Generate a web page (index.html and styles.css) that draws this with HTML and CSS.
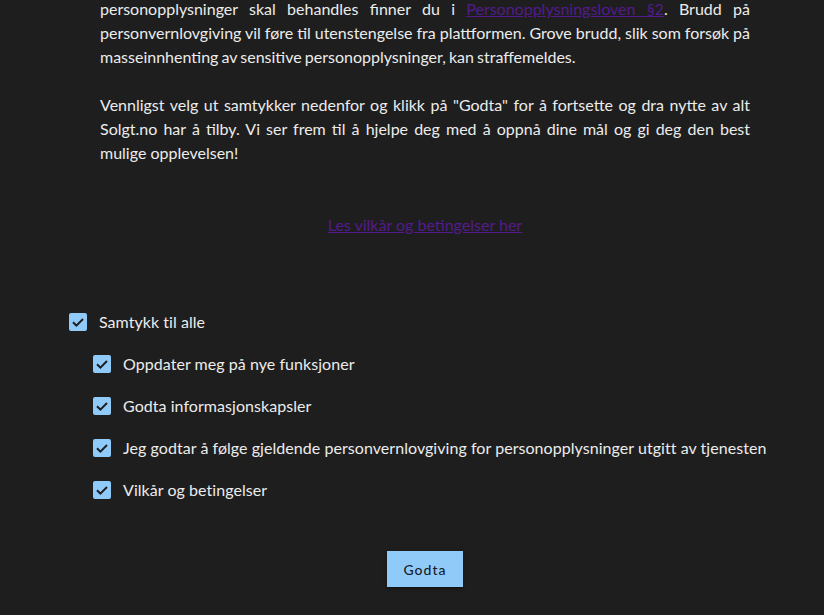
FILE: index.html
```
<!DOCTYPE html>
<html lang="no">
<head>
<meta charset="utf-8">
<title>Samtykke</title>
<link rel="stylesheet" href="styles.css">
</head>
<body>
<main class="page">
  <section class="terms">
    <p class="para para-tight">personopplysninger skal behandles finner du i <a class="link" href="#">Personopplysningsloven §2</a>. Brudd på personvernlovgiving vil føre til utenstengelse fra plattformen. Grove brudd, slik som forsøk på masseinnhenting av sensitive personopplysninger, kan straffemeldes.</p>
    <p class="para">Vennligst velg ut samtykker nedenfor og klikk på "Godta" for å fortsette og dra nytte av alt Solgt.no har å tilby. Vi ser frem til å hjelpe deg med å oppnå dine mål og gi deg den best mulige opplevelsen!</p>
    <div class="linkrow"><a class="link" href="#">Les vilkår og betingelser her</a></div>
  </section>
  <form class="consents">
    <label class="row">
      <span class="box"><svg viewBox="0 0 18 18" width="18" height="18"><polyline points="4,9.3 7.4,12.7 14,6" fill="none" stroke="#1e1e1e" stroke-width="2"/></svg></span>
      <span>Samtykk til alle</span>
    </label>
    <div class="sub">
      <label class="row">
        <span class="box"><svg viewBox="0 0 18 18" width="18" height="18"><polyline points="4,9.3 7.4,12.7 14,6" fill="none" stroke="#1e1e1e" stroke-width="2"/></svg></span>
        <span>Oppdater meg på nye funksjoner</span>
      </label>
      <label class="row">
        <span class="box"><svg viewBox="0 0 18 18" width="18" height="18"><polyline points="4,9.3 7.4,12.7 14,6" fill="none" stroke="#1e1e1e" stroke-width="2"/></svg></span>
        <span>Godta informasjonskapsler</span>
      </label>
      <label class="row">
        <span class="box"><svg viewBox="0 0 18 18" width="18" height="18"><polyline points="4,9.3 7.4,12.7 14,6" fill="none" stroke="#1e1e1e" stroke-width="2"/></svg></span>
        <span>Jeg godtar å følge gjeldende personvernlovgiving for personopplysninger utgitt av tjenesten</span>
      </label>
      <label class="row">
        <span class="box"><svg viewBox="0 0 18 18" width="18" height="18"><polyline points="4,9.3 7.4,12.7 14,6" fill="none" stroke="#1e1e1e" stroke-width="2"/></svg></span>
        <span>Vilkår og betingelser</span>
      </label>
    </div>
    <div class="actions"><button type="button" class="btn">Godta</button></div>
  </form>
</main>
</body>
</html>
```
FILE: styles.css
```
html, body {
  margin: 0;
  padding: 0;
  background: #1e1e1e;
  height: 100%;
  overflow: hidden;
}
.page {
  font-family: Lato, "Liberation Sans", sans-serif;
  font-size: 16px;
  line-height: 24px;
  color: #ececec;
  margin-top: -3px;
}
.terms {
  margin-left: 100px;
  width: 650px;
}
.para {
  margin: 0 0 24px 0;
  text-align: justify;
}
.para-tight {
  word-spacing: -1px;
}
.link {
  color: #551a8b;
  text-decoration: underline;
}
.linkrow {
  text-align: center;
  margin-top: 48px;
}
.consents {
  margin: 64px 0 0 69px;
}
.row {
  display: flex;
  align-items: center;
  height: 42px;
  gap: 12px;
  letter-spacing: 0.05px;
}
.box {
  width: 18px;
  height: 18px;
  background: #90caf9;
  border-radius: 2px;
  display: flex;
  flex-shrink: 0;
}
.sub {
  margin-left: 24px;
}
.actions {
  display: flex;
  justify-content: center;
  width: 712px;
  margin-top: 40px;
}
.btn {
  font-family: Lato, "Liberation Sans", sans-serif;
  width: 76px;
  height: 36px;
  border: 0;
  border-radius: 0;
  background: #90caf9;
  color: rgba(0,0,0,0.87);
  font-size: 14px;
  font-weight: 500;
  letter-spacing: 1px;
  box-shadow: 0 3px 1px -2px rgba(0,0,0,0.2), 0 2px 2px 0 rgba(0,0,0,0.14), 0 1px 5px 0 rgba(0,0,0,0.12);
}
```
